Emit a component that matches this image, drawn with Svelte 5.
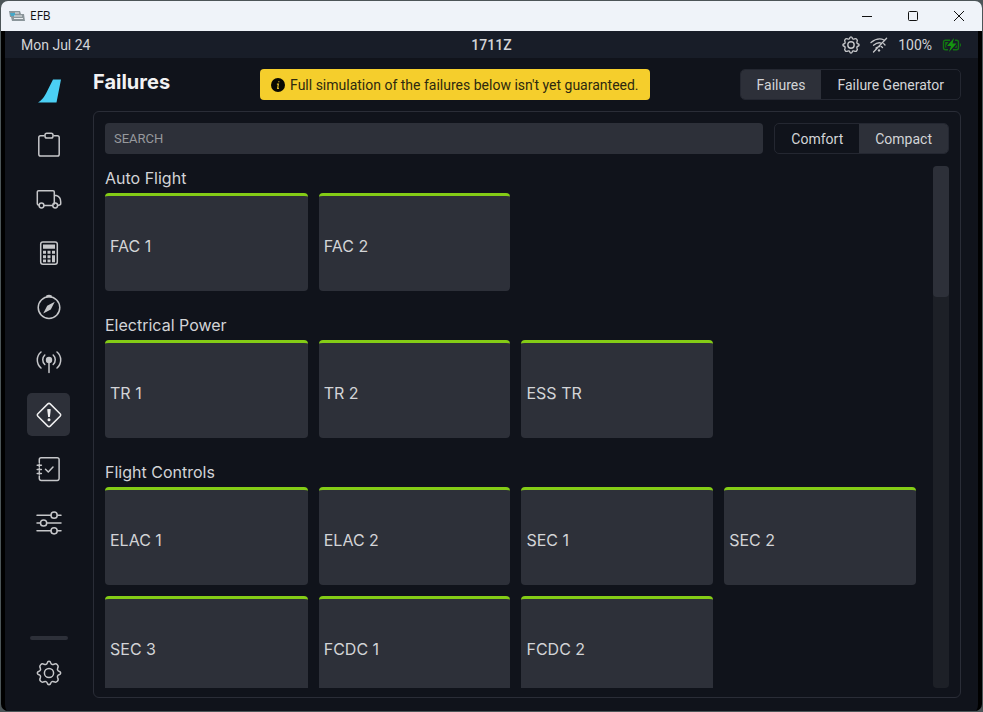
<script>
  const pages = ['Dispatch', 'Ground', 'Performance', 'Navigation', 'ATC', 'Failures', 'Checklists', 'Presets'];
  const sections = [
    { title: 'Auto Flight', items: ['FAC 1', 'FAC 2'] },
    { title: 'Electrical Power', items: ['TR 1', 'TR 2', 'ESS TR'] },
    { title: 'Flight Controls', items: ['ELAC 1', 'ELAC 2', 'SEC 1', 'SEC 2', 'SEC 3', 'FCDC 1', 'FCDC 2'] }
  ];

  let page = $state('Failures');
  let tab = $state('Failures');
  let density = $state('Compact');
  let query = $state('');
  let failed = $state({});

  const shown = $derived(
    sections
      .map((s) => ({ ...s, items: s.items.filter((i) => i.toLowerCase().includes(query.trim().toLowerCase())) }))
      .filter((s) => s.items.length)
  );

  function toggle(item) {
    failed[item] = !failed[item];
  }
</script>

{#snippet gear()}
  <path d="M13 1.3Q14.3 1.3 14.8 3Q15.6 5.2 17.8 4.3Q20 3.2 21.3 4.7Q22.8 6 21.7 8.2Q20.8 10.4 23 11.2Q24.7 11.7 24.7 13Q24.7 14.3 23 14.8Q20.8 15.6 21.7 17.8Q22.8 20 21.3 21.3Q20 22.8 17.8 21.7Q15.6 20.8 14.8 23Q14.3 24.7 13 24.7Q11.7 24.7 11.2 23Q10.4 20.8 8.2 21.7Q6 22.8 4.7 21.3Q3.2 20 4.3 17.8Q5.2 15.6 3 14.8Q1.3 14.3 1.3 13Q1.3 11.7 3 11.2Q5.2 10.4 4.3 8.2Q3.2 6 4.7 4.7Q6 3.2 8.2 4.3Q10.4 5.2 11.2 3Q11.7 1.3 13 1.3Z" />
  <circle cx="13" cy="13" r="4.6" />
{/snippet}

{#snippet icon(name)}
  <svg class="icon" viewBox="0 0 26 26" aria-hidden="true">
    {#if name === 'Dispatch'}
      <path d="M8 3.7H4.6A1.8 1.8 0 0 0 2.8 5.5V22.2A1.8 1.8 0 0 0 4.6 24H21.4A1.8 1.8 0 0 0 23.2 22.2V5.5A1.8 1.8 0 0 0 21.4 3.7H18" />
      <rect x="9" y="1.2" width="8" height="4.8" rx="1.8" />
    {:else if name === 'Ground'}
      <path d="M3 19H2.6A1.3 1.3 0 0 1 1.3 17.7V6A1.3 1.3 0 0 1 2.6 4.7H17A1.3 1.3 0 0 1 18.3 6V18M8 19.5H16.5M18.3 9.5H20.3Q24.7 10.5 24.7 16V17.8Q24.7 19.2 22.3 19.2" />
      <circle cx="5.5" cy="19.5" r="2.4" />
      <circle cx="19.2" cy="19.5" r="2.4" />
    {:else if name === 'Performance'}
      <rect x="4.7" y="1.9" width="16.6" height="22.3" rx="2.2" />
      <path class="fill" d="M7 4.5h12v4.2H7zM7 10.8h3v3H7zM11.5 10.8h3v3h-3zM16 10.8h3v3h-3zM7 15.3h3v3H7zM11.5 15.3h3v3h-3zM7 19.6h3v2.7H7zM11.5 19.6h3v2.7h-3zM16 15.3h3v7h-3z" />
    {:else if name === 'Navigation'}
      <circle cx="13" cy="13.6" r="10.8" />
      <path class="fill" d="M10.2 1.4Q13 .2 15.8 1.4V3.2H10.2ZM18.8 7.8L14.8 15.4L7.2 19.4L11.2 11.8Z" />
    {:else if name === 'ATC'}
      <path d="M13 12V24.5M8.8 7A6.5 6.5 0 0 0 8.8 16.5M17.2 7A6.5 6.5 0 0 1 17.2 16.5M5 4A10.5 10.5 0 0 0 5 20M21 4A10.5 10.5 0 0 1 21 20" />
      <circle class="fill" cx="13" cy="12" r="3.2" />
    {:else if name === 'Failures'}
      <path d="M11.8 1.9Q13 .8 14.2 1.9L24.1 11.8Q25.2 13 24.1 14.2L14.2 24.1Q13 25.2 11.8 24.1L1.9 14.2Q.8 13 1.9 11.8Z" />
      <path class="fill" d="M11.2 7.3Q13 6.5 14.8 7.3L13.9 15H12.1Z" />
      <circle class="fill" cx="13" cy="17.8" r="1.5" />
    {:else if name === 'Checklists'}
      <path d="M3.3 6.5V3.6A1.8 1.8 0 0 1 5.1 1.8H21.3A1.8 1.8 0 0 1 23.1 3.6V22.6A1.8 1.8 0 0 1 21.3 24.4H5.1A1.8 1.8 0 0 1 3.3 22.6V20M3.3 8V11M3.3 12.5V14.2M3.3 15.6V18.2M1.2 9.2H5.4M1.2 13.4H5.4M1.2 17.6H5.4" />
      <path d="M9.5 13.3L12.3 16L17 11" />
    {:else if name === 'Presets'}
      <path d="M1 5.2H14.8M21.4 5.2H25M1 13H4.3M10.9 13H25M1 20.8H14.8M21.4 20.8H25" />
      <circle cx="18.1" cy="5.2" r="3.1" />
      <circle cx="7.6" cy="13" r="3.1" />
      <circle cx="18.1" cy="20.8" r="3.1" />
    {:else}
      {@render gear()}
    {/if}
  </svg>
{/snippet}

<div class="window">
  <header class="titlebar">
    <svg class="app-icon" viewBox="0 0 16 12" aria-hidden="true">
      <path d="M0 1H11L12 4H15L16 11H3L2 7H1Z" fill="#8b969b" />
      <path d="M1 3H6V6H2ZM10 5H14" fill="#45a8c8" />
      <path d="M6 3H10M5 6H13M5 8.5H14" stroke="#e9edef" stroke-width="1.2" fill="none" />
    </svg>
    <span class="app-name">EFB</span>
    <button class="win" aria-label="Minimize"><svg viewBox="0 0 12 12"><path d="M1 6.5H11" /></svg></button>
    <button class="win" aria-label="Maximize"><svg viewBox="0 0 12 12"><rect x="1.5" y="1.5" width="9" height="9" rx="1" /></svg></button>
    <button class="win" aria-label="Close"><svg viewBox="0 0 12 12"><path d="M1 1L11 11M11 1L1 11" /></svg></button>
  </header>

  <div class="screen">
    <div class="status">
      <span>Mon Jul 24</span>
      <span class="clock">1711Z</span>
      <div class="indicators">
        <svg class="small" viewBox="0 0 26 26" aria-hidden="true">{@render gear()}</svg>
        <svg class="small wifi" viewBox="0 0 18 18" aria-hidden="true">
          <path d="M1 6.5Q8 1 14 4M3.5 9.2Q7.5 6 11 7M6 12Q8 10.2 9.7 10.6M16.6 2.2L3.5 16M13.7 7.6L15 9M11.3 10.5L12.5 11.6" />
          <circle class="fill" cx="9" cy="14.4" r="1.2" />
        </svg>
        <span>100%</span>
        <svg class="battery" viewBox="0 0 20 14" aria-hidden="true">
          <path d="M8 2.2H3.5Q1.5 2.2 1.5 4.2V9.8Q1.5 11.8 3.5 11.8H6M13 2.2H14.5Q16.5 2.2 16.5 4.2V9.8Q16.5 11.8 14.5 11.8H11" fill="none" stroke="#127512" stroke-width="1.4" />
          <path d="M3.2 4H6.5L4 7.5L4.5 9.5H3.2ZM14.8 7V9.8H12.8ZM18 5Q20 7 18 9Z" fill="#127512" />
          <path d="M12 0L5 8H9L7 14L14.5 5.5H10.5Z" fill="#159410" />
        </svg>
      </div>
    </div>

    <div class="body">
      <nav aria-label="Pages">
        <a class="logo" href="#home" aria-label="Home">
          <svg viewBox="0 0 24 24" aria-hidden="true">
            <path d="M16 .5H24L19.5 23.5H1Q5.5 21 9 14.5Z" fill="#4bd0f5" />
          </svg>
        </a>
        {#each pages as name}
          <button class="nav-item" class:active={page === name} aria-label={name} onclick={() => (page = name)}>
            {@render icon(name)}
          </button>
        {/each}
        <div class="divider"></div>
        <button class="nav-item" class:active={page === 'Settings'} aria-label="Settings" onclick={() => (page = 'Settings')}>
          {@render icon('Settings')}
        </button>
      </nav>

      <main>
        <div class="heading">
          <h1>Failures</h1>
          <p class="notice">
            <svg viewBox="0 0 14 14" aria-hidden="true">
              <circle cx="7" cy="7" r="7" fill="#080903" />
              <path d="M7.8 3.2V4.3M5.9 6.2H7.4L6.6 10.4H8" fill="none" stroke="#d9b528" stroke-width="1.2" />
            </svg>
            Full simulation of the failures below isn't yet guaranteed.
          </p>
          <div class="segments">
            {#each ['Failures', 'Failure Generator'] as name}
              <button class:on={tab === name} onclick={() => (tab = name)}>{name}</button>
            {/each}
          </div>
        </div>

        <div class="panel">
          <div class="tools">
            <input type="text" aria-label="Search" placeholder="SEARCH" bind:value={query} />
            <div class="segments">
              {#each ['Comfort', 'Compact'] as name}
                <button class:on={density === name} onclick={() => (density = name)}>{name}</button>
              {/each}
            </div>
          </div>

          <div class="scroller">
            <div class="list">
              {#each shown as section}
                <section>
                  <h2>{section.title}</h2>
                  <div class="cards">
                    {#each section.items as item}
                      <button class="card" class:failed={failed[item]} onclick={() => toggle(item)}>{item}</button>
                    {/each}
                  </div>
                </section>
              {/each}
            </div>
            <div class="track"><div class="thumb"></div></div>
          </div>
        </div>
      </main>
    </div>
  </div>
</div>

<style>
  :global(body) {
    background: #4c5558;
  }
  .window {
    box-sizing: border-box;
    height: 100vh;
    padding: 1px;
    display: flex;
    flex-direction: column;
    font: 14px/20px Roboto, sans-serif;
    color: #d3d4d7;
  }
  button {
    font: inherit;
    color: inherit;
    background: none;
    border: 0;
    padding: 0;
    cursor: pointer;
  }
  svg {
    display: block;
    flex: none;
  }
  .titlebar {
    display: flex;
    align-items: center;
    height: 30px;
    flex: none;
    padding-left: 8px;
    background: #eff3f9;
    border-radius: 7px 7px 0 0;
    color: #111;
  }
  .app-icon {
    width: 16px;
    height: 12px;
  }
  .app-name {
    flex: 1;
    margin-left: 5px;
    font: 12px/16px "Open Sans", sans-serif;
  }
  .win {
    width: 46px;
    height: 30px;
    display: grid;
    place-items: center;
  }
  .win svg {
    width: 12px;
    height: 12px;
    fill: none;
    stroke: #111;
    stroke-width: 1;
  }
  .screen {
    flex: 1;
    min-height: 0;
    display: flex;
    flex-direction: column;
    background: #10131b;
    border: solid #000;
    border-width: 0 4px;
    border-radius: 0 0 7px 7px;
  }
  .status {
    flex: none;
    display: grid;
    grid-template-columns: 1fr auto 1fr;
    align-items: center;
    height: 27px;
    padding: 0 16px;
    background: #181d28;
  }
  .clock {
    font-weight: 500;
  }
  .indicators {
    display: flex;
    justify-content: flex-end;
    align-items: center;
    gap: 10px;
  }
  .small,
  .icon {
    fill: none;
    stroke: #c6c7ca;
    stroke-width: 1.5;
    stroke-linecap: round;
    stroke-linejoin: round;
  }
  .small {
    width: 18px;
    height: 18px;
    stroke-width: 2;
  }
  .wifi {
    stroke-width: 1.3;
  }
  .battery {
    width: 20px;
    height: 14px;
  }
  .icon {
    width: 26px;
    height: 26px;
  }
  .fill {
    fill: #c6c7ca;
    stroke: none;
  }
  .body {
    flex: 1;
    min-height: 0;
    display: flex;
  }
  nav {
    width: 87px;
    flex: none;
    display: flex;
    flex-direction: column;
    align-items: center;
    gap: 11px;
    padding: 11px 0 17px;
    box-sizing: border-box;
  }
  .logo {
    height: 43px;
    display: grid;
    place-items: center;
  }
  .logo svg {
    width: 24px;
    height: 24px;
  }
  .nav-item {
    width: 43px;
    height: 43px;
    flex: none;
    display: grid;
    place-items: center;
    border-radius: 5px;
  }
  .nav-item.active {
    background: #2d3039;
  }
  .nav-item.active .icon {
    stroke: #f0f0f1;
  }
  .nav-item.active .fill {
    fill: #f0f0f1;
    stroke: none;
  }
  .divider {
    width: 38px;
    height: 4px;
    margin-top: auto;
    border-radius: 2px;
    background: #2d3039;
  }
  main {
    flex: 1;
    min-width: 0;
    display: flex;
    flex-direction: column;
    gap: 11px;
    padding: 11px 17px 13px 1px;
  }
  .heading {
    display: flex;
    justify-content: space-between;
    align-items: center;
  }
  h1 {
    margin: 0 0 6px;
    font: 700 20px/24px Inter, sans-serif;
    color: #f2f2f3;
  }
  .notice {
    display: flex;
    align-items: center;
    gap: 5px;
    height: 31px;
    margin: 0;
    padding: 0 11px;
    border-radius: 4px;
    background: #f5ce2c;
    color: #2d290f;
  }
  .notice svg {
    width: 14px;
    height: 14px;
  }
  .segments {
    display: flex;
    border: 1px solid #242731;
    border-radius: 5px;
    overflow: hidden;
  }
  .segments button {
    height: 29px;
    padding: 0 16px;
  }
  .segments .on {
    background: #2d3039;
  }
  .panel {
    flex: 1;
    min-height: 0;
    display: flex;
    flex-direction: column;
    gap: 12px;
    padding: 11px 11px 9px;
    border: 1px solid #2a2d37;
    border-radius: 6px;
  }
  .tools {
    display: flex;
    gap: 11px;
  }
  input {
    flex: 1;
    min-width: 0;
    box-sizing: border-box;
    height: 31px;
    padding: 0 9px;
    border: 0;
    border-radius: 4px;
    background: #2d3039;
    color: #d3d4d7;
    font: 13px/20px Roboto, sans-serif;
  }
  input::placeholder {
    color: #97999d;
    opacity: 1;
  }
  .scroller {
    flex: 1;
    min-height: 0;
    display: flex;
    gap: 17px;
  }
  .list {
    flex: 1;
    overflow: hidden;
  }
  section {
    margin-bottom: 22px;
  }
  h2 {
    margin: 0 0 3px;
    font: 400 16px/24px Inter, sans-serif;
  }
  .cards {
    display: grid;
    grid-template-columns: 203fr 192fr 192fr 192fr;
    gap: 11px;
  }
  .card {
    height: 98px;
    padding: 4px 5px 0;
    border-top: 3px solid #84cc16;
    border-radius: 4px;
    background: #2d3039;
    text-align: left;
    font: 400 16px/24px Inter, sans-serif;
  }
  .card.failed {
    border-color: #dc2626;
  }
  .track {
    width: 16px;
    flex: none;
    border-radius: 4px;
    background: #1d2027;
  }
  .thumb {
    height: 25%;
    border-radius: 4px;
    background: #2d3039;
  }
</style>
